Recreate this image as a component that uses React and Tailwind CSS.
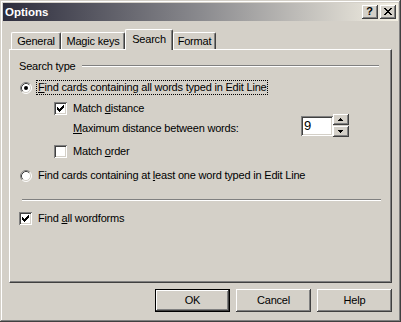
import React from 'react';

const raised = 'bg-[#d4d0c8] shadow-[inset_-1px_-1px_#404040,inset_1px_1px_#ffffff,inset_-2px_-2px_#808080]';
const sunken = 'shadow-[inset_1px_1px_#808080,inset_-1px_-1px_#ffffff,inset_2px_2px_#404040,inset_-2px_-2px_#d4d0c8]';

function Checkbox({ checked, className = '' }) {
    return (
        <div className={`w-[13px] h-[13px] shrink-0 bg-white ${sunken} ${className}`}>
            {checked && (
                <svg width="13" height="13" viewBox="0 0 13 13" shapeRendering="crispEdges">
                    <path
                        fill="#000"
                        d="M9 3h1v1h-1z M8 4h2v1h-2z M3 5h1v1h-1z M7 5h3v1h-3z M3 6h2v1h-2z M6 6h3v1h-3z M3 7h5v1h-5z M4 8h3v1h-3z M5 9h1v1h-1z"
                    />
                </svg>
            )}
        </div>
    );
}

function Radio({ checked }) {
    return (
        <svg width="12" height="12" viewBox="0 0 12 12" className="shrink-0 mt-[2px]">
            <circle cx="6" cy="6" r="5" fill="#fff" />
            <path d="M2.11 9.89A5.5 5.5 0 0 1 9.89 2.11" fill="none" stroke="#808080" />
            <path d="M9.89 2.11A5.5 5.5 0 0 1 2.11 9.89" fill="none" stroke="#ffffff" />
            <path d="M2.82 9.18A4.5 4.5 0 0 1 9.18 2.82" fill="none" stroke="#404040" />
            <path d="M9.18 2.82A4.5 4.5 0 0 1 2.82 9.18" fill="none" stroke="#d4d0c8" />
            {checked && <circle cx="6" cy="6" r="2" fill="#000" />}
        </svg>
    );
}

function Tab({ label, width, selected }) {
    if (selected) {
        return (
            <div
                className={`relative z-10 ${width} h-[21px] mb-[-1px] flex justify-center pt-[3px] bg-[#d4d0c8] border-l border-t border-white border-r border-r-[#404040] rounded-t-[2px] shadow-[inset_-1px_0_#808080]`}
            >
                {label}
            </div>
        );
    }
    return (
        <div
            className={`${width} h-[17px] flex justify-center pt-[2px] border-l border-t border-white border-r border-r-[#404040] rounded-t-[2px] shadow-[inset_-1px_0_#808080]`}
        >
            {label}
        </div>
    );
}

function Button({ label, isDefault }) {
    if (isDefault) {
        return (
            <div className="w-[75px] h-[23px] border border-black">
                <div className={`w-full h-full flex items-center justify-center ${raised}`}>{label}</div>
            </div>
        );
    }
    return (
        <div className={`w-[75px] h-[23px] flex items-center justify-center ${raised}`}>{label}</div>
    );
}

export default function App() {
    return (
        <div className="w-[401px] h-[322px] bg-[#d4d0c8] p-[3px] text-[11px] leading-[13px] tracking-[-0.2px] text-black font-['Liberation_Sans',Arial,sans-serif] shadow-[inset_-1px_-1px_#404040,inset_1px_1px_#d4d0c8,inset_-2px_-2px_#808080,inset_2px_2px_#ffffff] overflow-hidden">
            {/* Title bar */}
            <div className="h-[18px] flex items-center pl-[2px] pr-[2px] bg-[linear-gradient(to_right,#2c2c3c,#8a8a8e_50%,#f4f0e4)]">
                <span className="text-white font-bold text-[11.5px] tracking-normal">Options</span>
                <div className="ml-auto flex gap-[2px]">
                    <div className={`w-[16px] h-[14px] flex items-center justify-center font-bold text-[11px] leading-none tracking-normal ${raised}`}>
                        <span className="mt-[-1px] ml-[-1px]">?</span>
                    </div>
                    <div className={`w-[16px] h-[14px] flex items-center justify-center ${raised}`}>
                        <svg width="8" height="7" viewBox="0 0 8 7" shapeRendering="crispEdges" className="mt-[-1px] ml-[-1px]">
                            <path
                                fill="#000"
                                d="M0 0h2v1h-2z M6 0h2v1h-2z M1 1h2v1h-2z M5 1h2v1h-2z M2 2h4v1h-4z M3 3h2v1h-2z M2 4h4v1h-4z M1 5h2v1h-2z M5 5h2v1h-2z M0 6h2v1h-2z M6 6h2v1h-2z"
                            />
                        </svg>
                    </div>
                </div>
            </div>

            {/* Tabs */}
            <div className="mt-[8px] ml-[8px] h-[20px] flex items-end">
                <Tab label="General" width="w-[50px]" />
                <Tab label="Magic keys" width="w-[64px]" />
                <Tab label="Search" width="w-[48px]" selected />
                <Tab label="Format" width="w-[43px]" />
            </div>

            {/* Panel */}
            <div className="mx-[6px] h-[234px] border border-t-white border-l-white border-r-[#404040] border-b-[#404040] shadow-[inset_-1px_-1px_#808080]">
                <div className="flex flex-col pt-[9px] pl-[10px]">
                    <div className="h-[14px] flex items-center">
                        <span className="w-[63px] ml-[-1px] shrink-0">Search type</span>
                        <div className="w-[297px] h-[2px] border-t border-t-[#808080] border-b border-b-white" />
                    </div>

                    <div className="mt-[7px] h-[15px] flex items-start">
                        <Radio checked />
                        <span className="ml-[4px] h-[15px] px-[1px] border border-dotted border-black leading-[13px]">
                            <u>F</u>ind cards containing all words typed in Edit Line
                        </span>
                    </div>

                    <div className="mt-[7px] h-[13px] flex items-center">
                        <Checkbox checked className="ml-[34px]" />
                        <span className="ml-[6px]">Match <u>d</u>istance</span>
                    </div>

                    <div className="mt-[-1px] h-[23px] flex items-start">
                        <span className="ml-[53px] w-[228px] mt-[8px]"><u>M</u>aximum distance between words:</span>
                        <div className={`mt-[2px] w-[32px] h-[20px] bg-white ${sunken} pl-[3px] pt-[2px] text-[13px] leading-[15px] tracking-normal`}>
                            9
                        </div>
                        <div className="flex flex-col">
                            <div className={`w-[16px] h-[11px] flex items-center justify-center ${raised}`}>
                                <svg width="5" height="3" viewBox="0 0 5 3" shapeRendering="crispEdges" className="mt-[-1px] ml-[-1px]">
                                    <path fill="#000" d="M2 0h1v1h-1z M1 1h3v1h-3z M0 2h5v1h-5z" />
                                </svg>
                            </div>
                            <div className={`mt-[1px] w-[16px] h-[11px] flex items-center justify-center ${raised}`}>
                                <svg width="5" height="3" viewBox="0 0 5 3" shapeRendering="crispEdges" className="mt-[-1px] ml-[-1px]">
                                    <path fill="#000" d="M0 0h5v1h-5z M1 1h3v1h-3z M2 2h1v1h-1z" />
                                </svg>
                            </div>
                        </div>
                    </div>

                    <div className="mt-[8px] h-[13px] flex items-center">
                        <Checkbox className="ml-[34px]" />
                        <span className="ml-[6px]">Match <u>o</u>rder</span>
                    </div>

                    <div className="mt-[10px] h-[15px] flex items-start">
                        <Radio />
                        <span className="ml-[4px] h-[15px] px-[1px] border border-transparent leading-[13px]">
                            Find cards containing at <u>l</u>east one word typed in Edit Line
                        </span>
                    </div>

                    <div className="mt-[16px] ml-[2px] w-[359px] h-[2px] border-t border-t-[#808080] border-b border-b-white" />

                    <div className="mt-[11px] h-[13px] flex items-center">
                        <Checkbox checked className="ml-[-1px]" />
                        <span className="ml-[6px]">Find <u>a</u>ll wordforms</span>
                    </div>
                </div>
            </div>

            {/* Buttons */}
            <div className="mt-[6px] mr-[6px] flex justify-end gap-[6px]">
                <Button label="OK" isDefault />
                <Button label="Cancel" />
                <Button label="Help" />
            </div>
        </div>
    );
}
